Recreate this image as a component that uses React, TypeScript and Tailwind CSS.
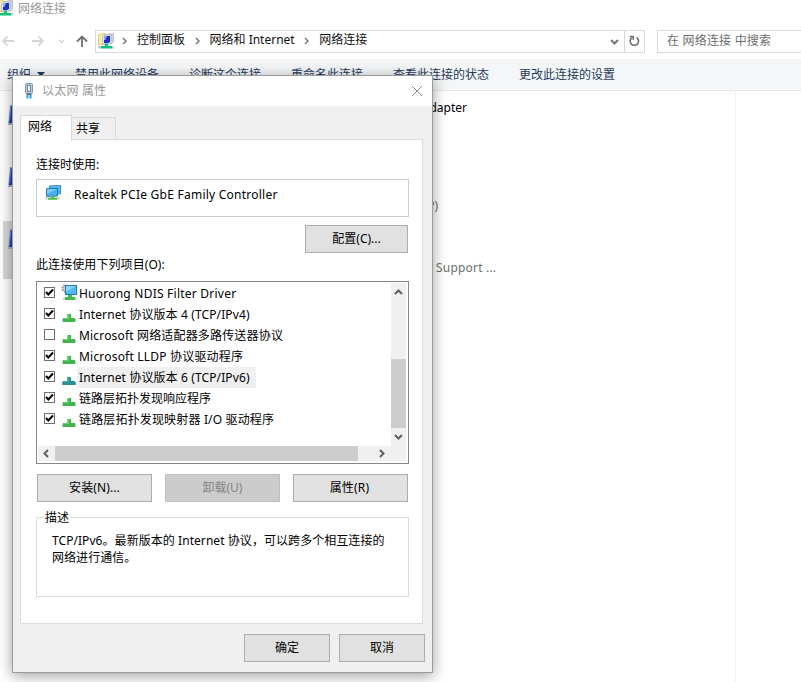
import type { ReactNode } from "react";
import clsx from "clsx";

type IconProps = { className?: string };

const PanelIcon = ({ className }: IconProps) => (
  <svg className={className} width={16} height={16} viewBox="0 0 16 16">
    <path d="M.5 1.500l6-1v11h-6z" fill="#f9eba4" stroke="#e3cc7c" />
    <path d="M6.500 1.500L15.500.5v8l-2 2.500h-7z" fill="#cfd3d8" stroke="#bcc1c6" />
    <path d="M4.500 3.500l2-1.500H13v7l-1.500 2h-7z" fill="#e3e8f1" stroke="#a3adbd" strokeWidth=".7" />
    <path d="M6 4l1-1h5v5.500L10.500 10H6z" fill="#1a2fc8" />
    <path d="M6 4l1-1h2L7.500 7H6z" fill="#8fa8f4" />
    <path d="M7 10.500h3v2.500h4v2.500H3V13h4z" fill="#11c07b" />
    <path d="M0 13h3v2.500H0zM14 13h2v2.500h-2z" fill="#c3cccb" />
  </svg>
);

const MonitorsIcon = ({ className }: IconProps) => (
  <svg className={className} width={17} height={16} viewBox="0 0 17 16">
    <path d="M0 12h15v2.500H0z" fill="#d3d8d4" />
    <path d="M4.500.9l11-.4v8.300l-11 .2z" fill="#54b9f0" stroke="#2a83b8" strokeWidth=".9" />
    <path d="M1.500 3.700l11-.3v7.700l-11 .2z" fill="#45b0ee" stroke="#1d6ea5" strokeWidth=".9" />
    <path d="M2 4.200l10-.3L2 9z" fill="#7dcdf6" />
    <path d="M6 11.500h3V13h3v1.800H3V13h3z" fill="#48c447" />
  </svg>
);

const FilterIcon = ({ className }: IconProps) => (
  <svg className={className} width={16} height={17} viewBox="0 0 16 17">
    <circle cx="4.500" cy="4.500" r="3.200" fill="#d5d9dc" stroke="#8f979d" strokeWidth="1.800" strokeDasharray="1.600 .9" />
    <rect x="4.500" y="1.500" width="11" height="9" fill="#4ebaf2" stroke="#267ca9" />
    <path d="M5 2h10L5 8z" fill="#8ad7fa" />
    <path d="M2 13.500h14V16H2z" fill="#cdd3cf" />
    <path d="M7 11h4v2h3v3H4v-3h3z" fill="#42bc49" />
  </svg>
);

const ProtocolIcon = ({ selected }: { selected?: boolean }) => (
  <svg className="mr-px mt-1" width={14} height={9} viewBox="0 0 14 9">
    <path d="M0 5h14v3H0z" fill={selected ? "#568fc5" : "#c3d0c6"} />
    <path d="M5 0h4v4h4v4H1V4h4z" fill={selected ? "#26948f" : "#3fb54b"} />
    <path d="M5 0h2v5H2V4h3z" fill={selected ? "#4ca9a0" : "#6ad26c"} />
  </svg>
);

const PlugIcon = () => (
  <svg width={10} height={16} viewBox="0 0 10 16">
    <rect x="1.500" y=".5" width="7" height="10" rx="1" fill="#b9cfe0" stroke="#7f98ad" />
    <rect x="3.500" y="2.500" width="3" height="6" fill="#f3f7fa" stroke="#6d8aa3" />
    <path d="M2.500 10.500h5v1.500h-5z" fill="#526c80" />
    <path d="M2.500 12h2v3.500h-2zM5.500 12h2v3.500h-2z" fill="#2fa6cf" />
  </svg>
);

const AdapterIcon = () => (
  <svg width={24} height={22} viewBox="0 0 24 22">
    <path d="M2 0h20l-1 20H0z" fill="#a9b0ba" />
    <path d="M2.500 1h17l-1 17H1z" fill="#1e40b8" />
    <path d="M2.500 1h1L2 16H1z" fill="#6f90e0" />
  </svg>
);

const Chevron = ({
  direction,
  className,
}: {
  direction: "up" | "down" | "left" | "right";
  className?: string;
}) => {
  const paths = {
    up: "M1 6l3.500-3.500L8 6",
    down: "M1 3l3.500 3.500L8 3",
    left: "M6 1L2.500 4.500 6 8",
    right: "M3 1l3.500 3.500L3 8",
  };

  return (
    <svg className={className} width={9} height={9} viewBox="0 0 9 9" fill="none" stroke="currentColor">
      <path d={paths[direction]} strokeWidth="2" />
    </svg>
  );
};

const Button = ({
  children,
  className,
  disabled,
}: {
  children: ReactNode;
  className?: string;
  disabled?: boolean;
}) => (
  <button
    disabled={disabled}
    className={clsx(
      "flex h-7 items-center justify-center border",
      disabled ? "border-[#bfbfbf] bg-[#cccccc] text-[#838383]" : "border-[#adadad] bg-[#e1e1e1]",
      className,
    )}
  >
    {children}
  </button>
);

const protocols = [
  { label: "Huorong NDIS Filter Driver", checked: true, filter: true, tracking: "tracking-[0.23px]" },
  { label: "Internet 协议版本 4 (TCP/IPv4)", checked: true, tracking: "tracking-[0.12px]" },
  { label: "Microsoft 网络适配器多路传送器协议", checked: false, tracking: "tracking-[0.17px]" },
  { label: "Microsoft LLDP 协议驱动程序", checked: true, tracking: "tracking-[0.2px]" },
  {
    label: "Internet 协议版本 6 (TCP/IPv6)",
    checked: true,
    selected: true,
    tracking: "tracking-[0.12px]",
  },
  { label: "链路层拓扑发现响应程序", checked: true },
  { label: "链路层拓扑发现映射器 I/O 驱动程序", checked: true, tracking: "tracking-[0.16px]" },
];

const ProtocolList = () => (
  <div className="flex h-[183px] w-[373px] flex-col border border-[#828790] bg-white p-px">
    <div className="flex h-[163px]">
      <ul className="w-[353px]">
        {protocols.map(({ label, checked, filter, selected, tracking }) => (
          <li key={label} className="flex h-[21px] items-center pl-1.5">
            <span className="mb-[3px] flex size-[11px] items-center justify-center border border-[#707070] bg-white">
              {checked && (
                <svg width={9} height={9} viewBox="0 0 9 9" fill="none" stroke="#000">
                  <path d="M1 4l2.300 2.500L8 1.500" strokeWidth="2" />
                </svg>
              )}
            </span>
            <span className="ml-1.5 flex w-[16px] shrink-0 justify-end pt-1">
              {filter ? <FilterIcon className="-mt-1.5" /> : <ProtocolIcon selected={selected} />}
            </span>
            <span
              className={clsx(
                "flex h-[21px] items-center whitespace-nowrap pl-0.5 pr-1.5",
                selected && "bg-[#f0f0f0]",
                tracking,
              )}
            >
              {label}
            </span>
          </li>
        ))}
      </ul>
      <div className="flex w-[15px] flex-col items-center bg-[#f0f0f0] text-[#606060]">
        <Chevron direction="up" className="mt-[5px]" />
        <div className="mt-[62px] h-[69px] w-full bg-[#cdcdcd]" />
        <Chevron direction="down" className="mt-1" />
      </div>
    </div>
    <div className="flex h-[15px] w-[368px] items-center bg-[#f0f0f0] text-[#606060]">
      <Chevron direction="left" className="ml-1" />
      <div className="ml-1 h-full w-[303px] bg-[#cdcdcd]" />
      <Chevron direction="right" className="ml-[19px]" />
    </div>
  </div>
);

const PropertiesDialog = () => (
  <div className="absolute left-3 top-[75px] flex h-[598px] w-[421px] flex-col border border-[#9b9b9b] bg-[#f0f0f0] shadow-[0_3px_14px_rgba(0,0,0,0.38)]">
    <div className="flex h-[30px] shrink-0 items-center bg-white pl-[11px] pr-[9px] text-[#999]">
      <PlugIcon />
      <span className="ml-2 tracking-[0.2px]">以太网 属性</span>
      <svg className="ml-auto" width={12} height={12} viewBox="0 0 12 12" stroke="#8c8c8c">
        <path d="M1 1l10 10M11 1L1 11" />
      </svg>
    </div>
    <div className="flex h-[34px] shrink-0 items-end pl-[7px] pt-[9px]">
      <div className="relative z-10 -mb-px h-[26px] w-[52px] shrink-0 border border-b-0 border-[#d9d9d9] bg-white pl-[7px] pt-0.5">
        网络
      </div>
      <div className="h-[23px] w-[44px] border border-b-0 border-l-0 border-[#d9d9d9] pl-1 pt-0.5">
        共享
      </div>
    </div>
    <div className="-mt-px ml-[7px] flex h-[485px] w-[403px] shrink-0 flex-col border border-[#dcdcdc] bg-white pl-[15px] pt-4">
      <div className="h-[23px]">连接时使用:</div>
      <div className="flex h-[38px] w-[373px] border border-[#cccccc] pl-2 pt-[5px]">
        <MonitorsIcon />
        <span className="ml-3 mt-px tracking-[0.24px]">Realtek PCIe GbE Family Controller</span>
      </div>
      <Button className="ml-[269px] mt-2 w-[103px] shrink-0">配置(C)...</Button>
      <div className="h-7 pt-[3px] tracking-[0.08px]">此连接使用下列项目(O):</div>
      <ProtocolList />
      <div className="ml-px mt-2.5 flex gap-[13px]">
        <Button className="w-[115px] tracking-[0.1px]">安装(N)...</Button>
        <Button className="w-[115px]" disabled>
          卸载(U)
        </Button>
        <Button className="w-[115px] pr-0.5 tracking-[0.2px]">属性(R)</Button>
      </div>
      <div className="mt-[15px] h-20 w-[373px] border border-[#dcdcdc] pl-1.5">
        <div className="-mt-[9px] h-[18px] w-7 bg-white px-0.5">描述</div>
        <p className="ml-[9px] mt-[5px] w-[345px] leading-[17px] tracking-[0.06px]">
          TCP/IPv6。最新版本的 Internet 协议，可以跨多个相互连接的
          <br />
          网络进行通信。
        </p>
      </div>
    </div>
    <div className="ml-[231px] mt-2.5 flex gap-[9px]">
      <Button className="w-[86px]">确定</Button>
      <Button className="w-[86px]">取消</Button>
    </div>
  </div>
);

const Crumb = ({ children }: { children: ReactNode }) => (
  <>
    <svg width={5} height={8} viewBox="0 0 5 8" className="mr-2.5 shrink-0" fill="none" stroke="#777" strokeWidth="1.500">
      <path d="M1 1l3 3-3 3" />
    </svg>
    <span className="mr-[9.500px] pb-0.5">{children}</span>
  </>
);

const AddressBar = () => (
  <div className="flex h-[24px] items-center">
    <svg width={14} height={12} viewBox="0 0 14 12" className="ml-px shrink-0" fill="none" stroke="#d6d6d6" strokeWidth="1.800">
      <path d="M13 6H2M6.500 1.500L2 6l4.500 4.500" />
    </svg>
    <svg width={14} height={12} viewBox="0 0 14 12" className="ml-4 shrink-0" fill="none" stroke="#d6d6d6" strokeWidth="1.800">
      <path d="M1 6h11M7.500 1.500L12 6l-4.500 4.500" />
    </svg>
    <svg width={7} height={5} viewBox="0 0 7 5" className="ml-[13px] shrink-0" fill="none" stroke="#d2d2d2" strokeWidth="1.500">
      <path d="M1 1l2.500 2.500L6 1" />
    </svg>
    <svg width={12} height={13} viewBox="0 0 12 13" className="ml-[11px] shrink-0" fill="none" stroke="#707070" strokeWidth="1.800">
      <path d="M6 12V2M1 6.500l5-5 5 5" />
    </svg>
    <div className="ml-[7px] flex h-[23px] w-[550px] shrink-0 items-center border border-[#d9d9d9]">
      <PanelIcon className="ml-[2px] shrink-0" />
      <div className="ml-2 flex items-center whitespace-nowrap text-[#111]">
        <Crumb>控制面板</Crumb>
        <Crumb>网络和 Internet</Crumb>
        <Crumb>网络连接</Crumb>
      </div>
      <Chevron direction="down" className="ml-auto mr-[5px] text-[#777]" />
      <div className="flex h-full w-[20px] items-center justify-center border-l border-[#d9d9d9]">
        <svg width={11} height={12} viewBox="0 0 11 12" fill="none" stroke="#6c6c6c" strokeWidth="1.600">
          <path d="M7.500 2.500A4.200 4.200 0 1 1 2.800 2.800M1 1.500h3.200v3.300" />
        </svg>
      </div>
    </div>
    <div className="ml-3 flex h-[23px] w-[160px] shrink-0 items-center border border-[#d9d9d9] pl-[9px] tracking-[0.2px] text-[#6d6d6d]">
      在 网络连接 中搜索
    </div>
  </div>
);

const App = () => (
  <div className="relative h-[682px] w-[801px] overflow-hidden bg-white font-['Noto_Sans','Noto_Sans_CJK_SC',sans-serif] text-[12px] leading-[18px] text-black">
    <div className="flex h-[29px] items-start text-[#999]">
      <PanelIcon className="-ml-[3px]" />
      <span className="ml-[5px]">网络连接</span>
    </div>
    <AddressBar />
    <div className="mt-[6px] flex h-8 items-center border-b border-[#e5e8ec] bg-[#f5f6f8] pl-[7px] text-[#1e395b]">
      <span>组织</span>
      <svg width={8} height={6} viewBox="0 0 8 6" className="ml-1.5" fill="#1e395b">
        <path d="M0 0h8L4 4.500z" />
      </svg>
      <span className="ml-[30px]">禁用此网络设备</span>
      <span className="ml-[30px]">诊断这个连接</span>
      <span className="ml-[30px]">重命名此连接</span>
      <span className="ml-[30px]">查看此连接的状态</span>
      <span className="ml-[30px]">更改此连接的设置</span>
    </div>
    <div className="h-[591px] w-[736px] border-r border-[#f3f3f3] pl-[3px] pt-[6px]">
      <div className="flex h-[62px] pl-[5px] pt-2">
        <AdapterIcon />
        <span className="-mt-1.5 w-[435px] text-right">Adapter</span>
      </div>
      <div className="flex h-[62px] pl-[5px] pt-2">
        <AdapterIcon />
        <span className="mt-[30px] w-[406px] text-right text-[#6d6d6d]">P)</span>
      </div>
      <div className="flex h-[58px]">
        <div className="flex w-[240px] bg-[#d9d9d9] pl-[5px] pt-2">
          <AdapterIcon />
        </div>
        <span className="ml-[193px] mt-[38px] tracking-[0.2px] text-[#6d6d6d]">Support ...</span>
      </div>
    </div>
    <PropertiesDialog />
  </div>
);

export default App;
